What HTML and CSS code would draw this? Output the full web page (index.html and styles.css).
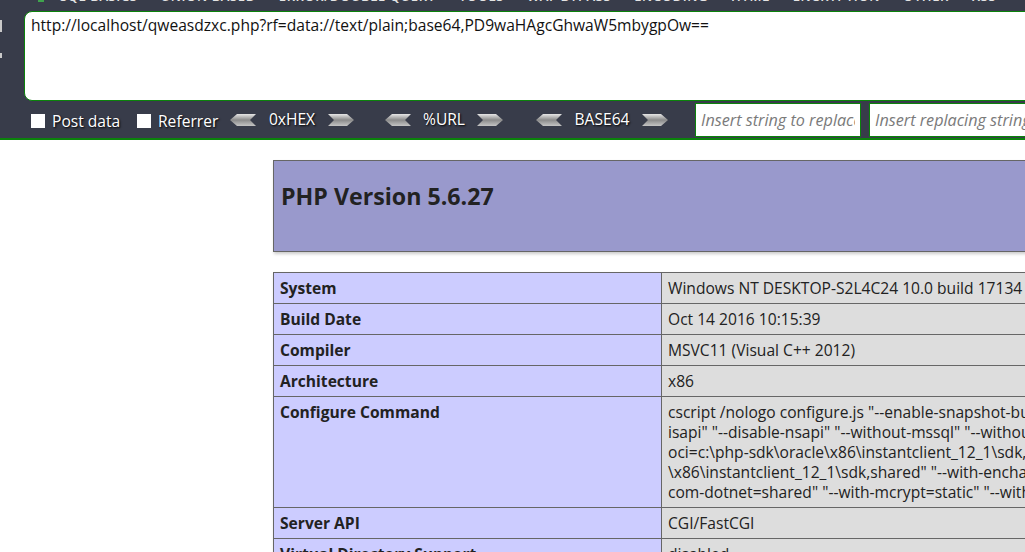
FILE: index.html
```html
<!DOCTYPE html>
<html>
<head>
<meta charset="utf-8">
<title>phpinfo()</title>
<link rel="stylesheet" href="styles.css">
</head>
<body>
<div class="hackbar">
  <div class="menu">
    <span class="mi-icon"></span>
    <span class="mi">SQL BASICS</span>
    <span class="mi">UNION BASED</span>
    <span class="mi">ERROR/DOUBLE QUERY</span>
    <span class="mi">TOOLS</span>
    <span class="mi">WAF BYPASS</span>
    <span class="mi">ENCODING</span>
    <span class="mi">HTML</span>
    <span class="mi">ENCRYPTION</span>
    <span class="mi">OTHER</span>
    <span class="mi">XSS</span>
  </div>
  <div class="main">
    <div class="side"><span class="mark m1"></span><span class="mark m2"></span></div>
    <textarea class="url" spellcheck="false">http://localhost/qweasdzxc.php?rf=data://text/plain;base64,PD9waHAgcGhwaW5mbygpOw==</textarea>
  </div>
  <div class="tools">
    <label class="chk chk-post"><span class="box"></span>Post data</label>
    <label class="chk chk-ref"><span class="box"></span>Referrer</label>
    <div class="enc enc-hex">
      <svg class="arr" width="26" height="12" viewBox="0 0 26 12"><defs><linearGradient id="g1" x1="0" y1="0" x2="0" y2="1"><stop offset="0" stop-color="#e6e6e6"/><stop offset="0.5" stop-color="#8a8a8a"/><stop offset="1" stop-color="#c4c4c4"/></linearGradient></defs><polygon points="0,6 7,0 26,0 20,6 26,12 7,12" fill="url(#g1)"/></svg>
      <span class="lbl">0xHEX</span>
      <svg class="arr" width="26" height="12" viewBox="0 0 26 12"><polygon points="0,0 19,0 26,6 19,12 0,12 6,6" fill="url(#g1)"/></svg>
    </div>
    <div class="enc enc-url">
      <svg class="arr" width="26" height="12" viewBox="0 0 26 12"><polygon points="0,6 7,0 26,0 20,6 26,12 7,12" fill="url(#g1)"/></svg>
      <span class="lbl">%URL</span>
      <svg class="arr" width="26" height="12" viewBox="0 0 26 12"><polygon points="0,0 19,0 26,6 19,12 0,12 6,6" fill="url(#g1)"/></svg>
    </div>
    <div class="enc enc-b64">
      <svg class="arr" width="26" height="12" viewBox="0 0 26 12"><polygon points="0,6 7,0 26,0 20,6 26,12 7,12" fill="url(#g1)"/></svg>
      <span class="lbl">BASE64</span>
      <svg class="arr" width="26" height="12" viewBox="0 0 26 12"><polygon points="0,0 19,0 26,6 19,12 0,12 6,6" fill="url(#g1)"/></svg>
    </div>
    <input class="field field-a" type="text" placeholder="Insert string to replace">
    <input class="field field-b" type="text" placeholder="Insert replacing string">
  </div>
</div>

<div class="page">
  <div class="phphead"><h1>PHP Version 5.6.27</h1></div>
  <table class="info">
    <tr><td class="e">System</td><td class="v">Windows NT DESKTOP-S2L4C24 10.0 build 17134 (Windows 10) i586</td></tr>
    <tr><td class="e">Build Date</td><td class="v">Oct 14 2016 10:15:39</td></tr>
    <tr><td class="e">Compiler</td><td class="v">MSVC11 (Visual C++ 2012)</td></tr>
    <tr><td class="e">Architecture</td><td class="v">x86</td></tr>
    <tr><td class="e">Configure Command</td><td class="v nw">cscript /nologo configure.js "--enable-snapshot-build" "--enable-debug-pack" "--disable-zts" "--disable-<br>isapi" "--disable-nsapi" "--without-mssql" "--without-pdo-mssql" "--without-pi3web" "--with-pdo-<br>oci=c:\php-sdk\oracle\x86\instantclient_12_1\sdk,shared" "--with-oci8-12c=c:\php-sdk\oracle<br>\x86\instantclient_12_1\sdk,shared" "--with-enchant=shared" "--enable-object-out-dir=../obj/" "--enable-<br>com-dotnet=shared" "--with-mcrypt=static" "--without-analyzer" "--with-pgo"</td></tr>
    <tr><td class="e">Server API</td><td class="v">CGI/FastCGI</td></tr>
    <tr><td class="e">Virtual Directory Support</td><td class="v">disabled</td></tr>
    <tr><td class="e">Configuration File (php.ini) Path</td><td class="v">C:\Windows</td></tr>
  </table>
</div>
</body>
</html>
```

FILE: styles.css
```css
html, body {
  margin: 0;
  padding: 0;
  overflow: hidden;
  background: #ffffff;
}

body {
  width: 1025px;
  height: 552px;
  font-family: "Open Sans", "Noto Sans", sans-serif;
  color: #222222;
}

/* ---------- HackBar ---------- */
.hackbar {
  background: #383c4a;
  height: 140px;
  box-sizing: border-box;
  border-bottom: 2px solid #0b820b;
  overflow: hidden;
}

.menu {
  height: 11px;
  display: flex;
  align-items: flex-start;
  padding-left: 38px;
  overflow: hidden;
}

.mi-icon {
  flex: none;
  width: 6px;
  height: 2px;
  background: #3fa34d;
  margin-right: 16px;
}

.mi {
  flex: none;
  font-size: 13px;
  line-height: 14px;
  margin-top: -11px;
  font-weight: 600;
  color: #e4e4e4;
  letter-spacing: 0.6px;
  margin-right: 23px;
  white-space: nowrap;
}

.main {
  display: flex;
  height: 90px;
  margin-right: -20px;
}

.side {
  flex: none;
  width: 24px;
  display: flex;
  flex-direction: column;
  align-items: flex-start;
}

.mark {
  display: block;
  width: 2px;
  background: #c9c9c9;
}

.m1 {
  height: 12px;
  margin-top: 9px;
}

.m2 {
  height: 5px;
  margin-top: 21px;
}

.url {
  flex: 1;
  height: 90px;
  box-sizing: border-box;
  margin: 0;
  border: 1px solid #0b820b;
  border-radius: 8px 0 0 8px;
  background: #ffffff;
  padding: 3px 6px;
  font-family: "Open Sans", "Noto Sans", sans-serif;
  font-size: 15.6px;
  line-height: 20px;
  color: #111111;
  resize: none;
  outline: none;
}

.tools {
  display: flex;
  align-items: center;
  height: 38px;
  padding-left: 31px;
  color: #ffffff;
  font-size: 15.6px;
}

.tools > * {
  flex: none;
}

.chk {
  display: flex;
  align-items: center;
  gap: 7px;
  text-shadow: 1px 1px 2px #000000;
  white-space: nowrap;
  margin-top: 2px;
}

.chk-post { width: 106px; }
.chk-ref { width: 93px; }

.box {
  flex: none;
  width: 14px;
  height: 14px;
  background: #ffffff;
  display: block;
}

.enc {
  display: flex;
  align-items: center;
}

.enc-hex { width: 124px; margin-right: 31px; }
.enc-url { width: 118px; margin-right: 33px; }
.enc-b64 { width: 132px; margin-right: 27px; }

.arr {
  display: block;
  flex: none;
}

.lbl {
  flex: 1;
  text-align: center;
  text-shadow: 1px 1px 2px #000000;
  white-space: nowrap;
  margin-top: -2px;
}

.field {
  height: 34px;
  box-sizing: border-box;
  border: 1px solid #0b820b;
  background: #ffffff;
  margin: 0;
  padding: 0 5px;
  font-family: "Open Sans", "Noto Sans", sans-serif;
  font-size: 16.2px;
  font-style: italic;
  outline: none;
}

.field::placeholder {
  color: #7a7a7a;
}

.field-a { width: 166px; margin-right: 8px; }
.field-b { width: 220px; }

/* ---------- phpinfo page ---------- */
.page {
  padding-left: 273px;
  padding-top: 20px;
}

.phphead {
  width: 1167px;
  height: 92px;
  box-sizing: border-box;
  background: #9999cc;
  border: 1px solid #666666;
  box-shadow: 1px 2px 3px #cccccc;
  padding: 20px 7px 0;
}

.phphead h1 {
  margin: 0;
  font-size: 23.2px;
  line-height: 30px;
  font-weight: bold;
  color: #222222;
}

.info {
  margin-top: 20px;
  width: 1167px;
  border-collapse: collapse;
  box-shadow: 1px 2px 3px #cccccc;
}

.info td {
  border: 1px solid #666666;
  padding: 5px 6px;
  font-size: 15.6px;
  line-height: 20px;
  vertical-align: baseline;
  text-align: left;
}

.info .e {
  width: 375px;
  background: #ccccff;
  font-weight: bold;
}

.info .v {
  background: #dddddd;
}

.info .nw {
  white-space: nowrap;
}
```
